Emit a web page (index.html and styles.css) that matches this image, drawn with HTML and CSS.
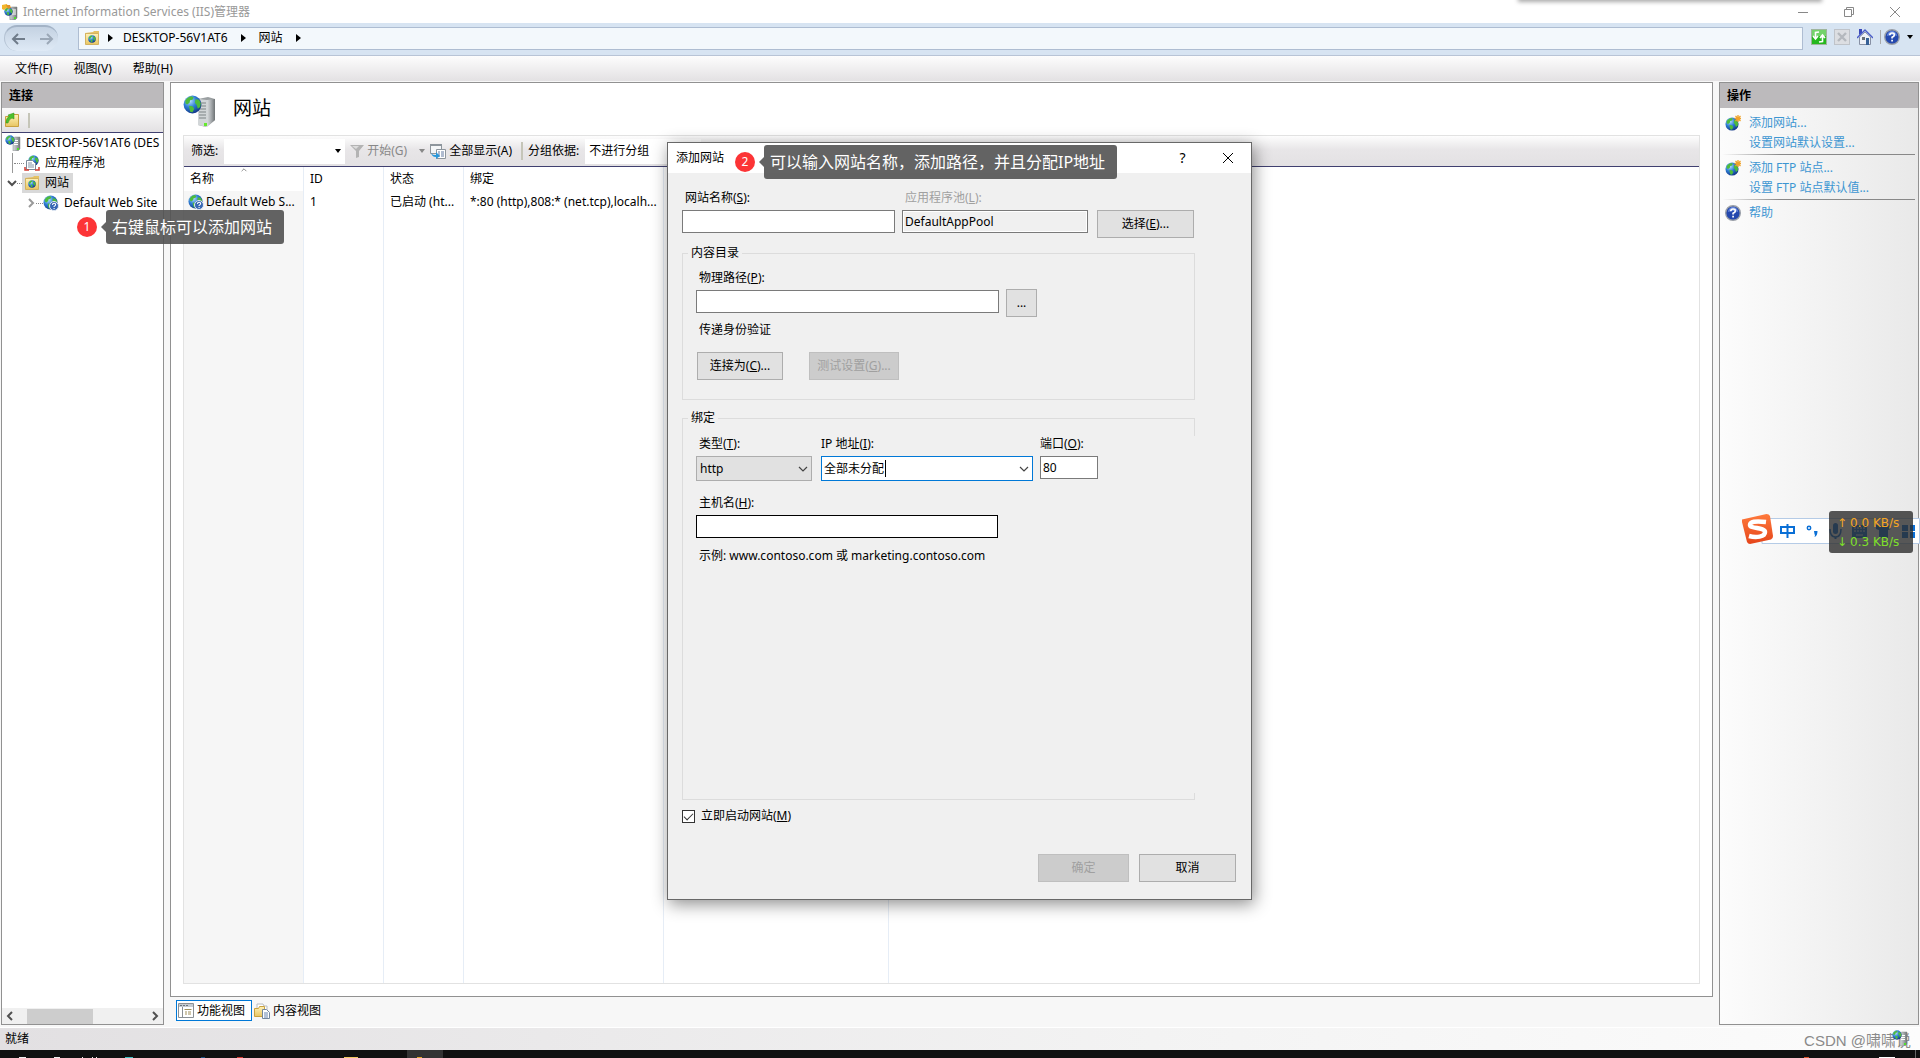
FILE: index.html
```html
<!DOCTYPE html>
<html lang="zh-CN">
<head>
<meta charset="utf-8">
<title>Internet Information Services (IIS)管理器</title>
<link rel="stylesheet" href="styles.css">
</head>
<body>
<svg class="defs" width="0" height="0" aria-hidden="true">
  <defs>
    <radialGradient id="sea" cx=".35" cy=".3" r=".8"><stop offset="0" stop-color="#b9e2ff"/><stop offset=".45" stop-color="#2f7fd6"/><stop offset="1" stop-color="#0b2a78"/></radialGradient>
    <linearGradient id="metal"><stop offset="0" stop-color="#d9dcde"/><stop offset=".5" stop-color="#a9adb0"/><stop offset="1" stop-color="#6d7274"/></linearGradient>
    <linearGradient id="paper" x2="0" y2="1"><stop offset="0" stop-color="#fff3b8"/><stop offset="1" stop-color="#e8c562"/></linearGradient>
    <linearGradient id="orange" x2="0" y2="1"><stop offset="0" stop-color="#ff7a3c"/><stop offset="1" stop-color="#e5451a"/></linearGradient>
    <symbol id="globe" viewBox="0 0 16 16">
      <circle cx="8" cy="8" r="7.500" fill="url(#sea)"/>
      <path d="M2 4.500Q4 1.500 7 1l2 1-1 2-2 .5-.5 2-2 1.500-1.500-1zM5 9l3 .5 1.500 2L8 14.500 6 14zM10.500 3.500l3 .5 1.500 3-.5 3-2 1.500-1-3-1.500-2z" fill="#4dbb3c"/>
    </symbol>
    <symbol id="host" viewBox="0 0 16 16">
      <path d="M8 3l2-1h5v12l-2 2H8z" fill="url(#metal)" stroke="#85898b" stroke-width=".5"/>
      <path d="M9 5.500h4M9 7.500h4M9 9.500h4" stroke="#fff"/>
      <path d="M12 13h2v2h-2z" fill="#4fe02c"/>
      <use href="#globe" x="0" y="0" width="10" height="10"/>
    </symbol>
    <symbol id="app" viewBox="0 0 16 16">
      <path d="M7 4l3-1h5v11l-2 2H8z" fill="url(#metal)" stroke="#74797b" stroke-width=".5"/>
      <path d="M10 6h4M10 8h4M10 10h4" stroke="#fff"/>
      <path d="M12 13h2v2h-2z" fill="#4fe02c"/>
      <use href="#globe" x="2" y="3" width="9" height="9"/>
      <path d="M0 1l5-1 1 3-4 3-2-1z" fill="#f3b62c"/>
      <path d="M4 1l4 0 1 3-3 1z" fill="#e0942a"/>
    </symbol>
    <symbol id="bighost" viewBox="0 0 32 32">
      <path d="M15 4l10-2 7 2v21l-9 7-8-2z" fill="#9a9fa1"/>
      <path d="M15 4l9 1v27l-9-2z" fill="#d2d6d8"/>
      <path d="M24 5l8-1v21l-8 7z" fill="url(#metal)"/>
      <path d="M16 8h7M16 11h7M16 14h7M16 17h7M16 20h7M16 23h7" stroke="#7d8385"/>
      <path d="M21 28h3v3h-3z" fill="#65e92c"/>
      <use href="#globe" x="0" y="0" width="19" height="19"/>
    </symbol>
    <symbol id="sitefolder" viewBox="0 0 16 16">
      <path d="M1 3l8-1 1-1h5v13H1z" fill="#e6c264"/>
      <path d="M1.500 3.500h13v11h-13z" fill="url(#paper)" stroke="#d3b261"/>
      <use href="#globe" x="4" y="5" width="8" height="8"/>
    </symbol>
    <symbol id="openfolder" viewBox="0 0 16 16">
      <path d="M1.500 4.500h6l1-2h6v12h-13z" fill="url(#paper)" stroke="#c9a13f"/>
      <path d="M2 11Q2 6 5 4.500L4 3l6-2 0 6-2-1Q5 7 4 11z" fill="#4dc12d" stroke="#2d8d18" stroke-width=".5"/>
    </symbol>
    <symbol id="pools" viewBox="0 0 16 16">
      <use href="#globe" x="4" y="0" width="11" height="11"/>
      <path d="M2.500 5.500h6l3 3v6h-9z" fill="#fff" stroke="#7a8998"/>
      <path d="M4 8h4M4 10h6M4 12h6" stroke="#8192a5"/>
      <path d="M1 12v3h4M11 15h4v-3" fill="none" stroke="#d23b32" stroke-width="1.500"/>
    </symbol>
    <symbol id="site" viewBox="0 0 16 16">
      <use href="#globe" x="0" y="0" width="15" height="15"/>
      <circle cx="11" cy="11" r="4.500" fill="#3767b4" stroke="#e3e9f2"/>
      <path d="M9.500 10q0-1.700 1.600-1.700t1.500 1.400q0 .8-1.500 1.700v.6M11.100 13v1" fill="none" stroke="#fff" stroke-width="1.100"/>
    </symbol>
    <symbol id="newsite" viewBox="0 0 16 16">
      <use href="#globe" x="0" y="2" width="14" height="14"/>
      <path d="M13 0v7M9.500 3.500h7M10.500 1l5 5M15.500 1l-5 5" stroke="#f0a32b" stroke-width="1.300"/>
    </symbol>
    <symbol id="help" viewBox="0 0 16 16">
      <circle cx="8" cy="8" r="7.300" fill="#2448ae" stroke="#9a9fa8" stroke-width="1.400"/>
      <path d="M3 7a5 5 0 0 1 10 0Q8 5 3 7z" fill="#6688dc"/>
      <path d="M5.800 6.300q0-2.300 2.300-2.300t2.200 1.900q0 1.200-2.200 2.400v1.200M8.100 10.800v1.700" fill="none" stroke="#fff" stroke-width="1.700"/>
    </symbol>
    <symbol id="chev" viewBox="0 0 10 10"><path d="M1 3l4 4 4-4" fill="none" stroke="currentColor" stroke-width="1.200"/></symbol>
    <symbol id="boldchev" viewBox="0 0 10 10"><path d="M1 3l4 4 4-4" fill="none" stroke="currentColor" stroke-width="2"/></symbol>
    <symbol id="tri" viewBox="0 0 6 4"><path d="M0 0h6L3 4z" fill="currentColor"/></symbol>
    <symbol id="right" viewBox="0 0 5 8"><path d="M0 0l5 4-5 4z"/></symbol>
  </defs>
</svg>

<header class="titlebar">
  <svg class="ic"><use href="#app"/></svg>
  <h1>Internet Information Services (IIS)管理器</h1>
  <div class="winbtns">
    <button type="button" aria-label="最小化"><svg width="10" height="10"><path d="M0 5.500h10"/></svg></button>
    <button type="button" aria-label="还原"><svg width="10" height="10"><path d="M.5 2.500h7v7h-7zM2.500 2.500v-2h7v7h-2"/></svg></button>
    <button type="button" aria-label="关闭"><svg width="10" height="10"><path d="M0 0l10 10M10 0L0 10"/></svg></button>
  </div>
  <div class="edge-shadow"></div>
</header>

<nav class="navbar">
  <div class="backfwd">
    <button type="button" aria-label="后退"><svg width="14" height="12"><path d="M14 6H2M7 1L2 6l5 5"/></svg></button>
    <button type="button" aria-label="前进" class="dim"><svg width="14" height="12"><path d="M0 6h12M7 1l5 5-5 5"/></svg></button>
  </div>
  <div class="address">
    <svg class="ic"><use href="#sitefolder"/></svg>
    <svg class="ar"><use href="#right"/></svg>
    <span>DESKTOP-56V1AT6</span>
    <svg class="ar"><use href="#right"/></svg>
    <span>网站</span>
    <svg class="ar"><use href="#right"/></svg>
  </div>
  <div class="navtools">
    <svg class="ic" viewBox="0 0 16 16"><rect x=".5" y=".5" width="15" height="15" fill="#25b81e" stroke="#9fb59c"/><path d="M1 1h14v6H1z" fill="#a9e59c" opacity=".6"/><path d="M8 3L4.500 3.500v5M2 7l2.500 3L7 7M8 13l3.500-.5v-5M9 9l2.500-3L14 9" fill="none" stroke="#fff" stroke-width="1.600"/></svg>
    <svg class="ic" viewBox="0 0 16 16"><rect x=".5" y=".5" width="15" height="15" fill="#dcdee2" stroke="#bfc3c9"/><path d="M4 4l8 8M12 4l-8 8" stroke="#b4b8be" stroke-width="2.400"/></svg>
    <svg class="ic" viewBox="0 0 16 16"><path d="M2.500 8L8 3l5.500 5v7.500h-11z" fill="#eef1f7" stroke="#8790a4"/><path d="M2 0h3v4L2 6z" fill="#3947b8"/><path d="M0 9l8-8 8 8" fill="none" stroke="#4a5cc8" stroke-width="1.400"/><path d="M9 9h3v7H9z" fill="#356096"/><path d="M5 8h3v3H5z" fill="#6a7078"/></svg>
    <i class="sep"></i>
    <svg class="ic"><use href="#help"/></svg>
    <svg class="tri"><use href="#tri"/></svg>
  </div>
</nav>

<div class="menubar">
  <button type="button">文件(F)</button><button type="button">视图(V)</button><button type="button">帮助(H)</button>
</div>

<main class="work">
  <aside class="panel connections">
    <h2>连接</h2>
    <div class="ptool"><svg class="ic"><use href="#openfolder"/></svg><i></i></div>
    <ul class="tree">
      <li class="lv0"><svg class="ic"><use href="#host"/></svg><span>DESKTOP-56V1AT6 (DES</span></li>
      <li class="lv1"><i class="dots"></i><svg class="ic"><use href="#pools"/></svg><span>应用程序池</span></li>
      <li class="lv1 sites"><svg class="exp"><use href="#boldchev"/></svg><i class="dots"></i><b><svg class="ic"><use href="#sitefolder"/></svg><span>网站</span></b></li>
      <li class="lv2"><svg class="exp closed"><use href="#boldchev"/></svg><i class="dots"></i><svg class="ic"><use href="#site"/></svg><span>Default Web Site</span></li>
    </ul>
    <div class="hscroll">
      <svg class="exp l"><use href="#boldchev"/></svg><div class="track"><div class="thumb"></div></div><svg class="exp r"><use href="#boldchev"/></svg>
    </div>
  </aside>

  <section class="center">
    <div class="panel page">
      <div class="pagehead"><svg><use href="#bighost"/></svg><h2>网站</h2></div>
      <div class="listbox">
        <div class="filter">
          <label for="flt">筛选:</label>
          <span class="combo"><input id="flt" type="text"><svg class="tri"><use href="#tri"/></svg></span>
          <button type="button" class="go" disabled><svg class="ic" viewBox="0 0 16 16"><path d="M1 2h14l-5 6v6l-3 1V8z" fill="#b3b3b3"/><path d="M3 3h7l-3 3z" fill="#dcdcdc"/></svg>开始(G)<svg class="tri"><use href="#tri"/></svg></button>
          <button type="button" class="all"><svg class="ic" viewBox="0 0 16 16"><path d="M.5 1.500h11v9H.5z" fill="#f4f6f8" stroke="#8d959c"/><path d="M0 1h12v2H0z" fill="#8d959c"/><path d="M6.500 6.500h9v9h-9z" fill="#fff" stroke="#8d959c"/><path d="M8 9h2m1 0h3M8 11h2m1 0h3M8 13h2m1 0h3" stroke="#6078a0"/><path d="M1 8q0 4 4 4h1v-3l4 4-4 3v-2Q1 14 1 8" fill="#2b98da"/></svg>全部显示(A)</button>
          <i class="sep"></i>
          <label for="grp">分组依据:</label>
          <select id="grp"><option>不进行分组</option></select>
        </div>
        <div class="tablewrap">
          <svg class="sort"><use href="#chev"/></svg>
          <table>
            <colgroup><col class="c1"><col class="c2"><col class="c2"><col class="c4"><col class="c5"><col></colgroup>
            <thead><tr><th>名称</th><th>ID</th><th>状态</th><th>绑定</th><th></th><th></th></tr></thead>
            <tbody>
              <tr class="row"><td><svg class="ic"><use href="#site"/></svg>Default Web S...</td><td>1</td><td>已启动 (ht...</td><td>*:80 (http),808:* (net.tcp),localh...</td><td></td><td></td></tr>
              <tr><td></td><td></td><td></td><td></td><td></td><td></td></tr>
            </tbody>
          </table>
        </div>
      </div>
    </div>
    <div class="viewtabs">
      <button type="button" class="on"><svg class="ic" viewBox="0 0 16 16"><path d="M.5.5h15v14H.5z" fill="#fff" stroke="#8a8f94"/><path d="M1 1h14v3H1z" fill="#c5cbd1"/><path d="M2 2.500h2m1 0h2m1 0h2" stroke="#6d747b"/><path d="M4.500 4v10" stroke="#8a8f94"/><path d="M6.500 6.500h7M7 9h2m1 0h3M7 11h2m1 0h3" stroke="#a08f5a"/></svg>功能视图</button>
      <button type="button"><svg class="ic" viewBox="0 0 16 16"><path d="M3 1h6l1 2h3v8H3z" fill="#fff" stroke="#b9bcc0"/><path d="M.5 5.500h4l1-2h5v10H.5z" fill="url(#paper)" stroke="#c9a13f"/><path d="M8.500 6.500h4l3 3v6h-7z" fill="#fff" stroke="#73879e"/><path d="M10 10h4M10 12h4M10 14h4" stroke="#6784b0"/></svg>内容视图</button>
    </div>
  </section>

  <aside class="panel actions">
    <h2>操作</h2>
    <ul>
      <li><svg class="ic"><use href="#newsite"/></svg><a href="#add">添加网站...</a></li>
      <li><a href="#defaults">设置网站默认设置...</a></li>
    </ul>
    <ul>
      <li><svg class="ic"><use href="#newsite"/></svg><a href="#ftp">添加 FTP 站点...</a></li>
      <li><a href="#ftpdefaults">设置 FTP 站点默认值...</a></li>
    </ul>
    <ul>
      <li><svg class="ic"><use href="#help"/></svg><a href="#help-topic">帮助</a></li>
    </ul>
  </aside>
</main>

<footer class="status"><span>就绪</span><span class="mark">CSDN @啸啸说</span><svg class="ic"><use href="#host"/></svg></footer>
<div class="taskbar">
  <svg width="450" height="8"><path d="M407 0h36v8h-36z" fill="#333"/><path d="M19 7h7v1h-7zM54 7h6v1h-6zM82 7h1v1h-1zM92 7h1v1h-1zM96 7h1v1h-1z" fill="#eee"/><path d="M125 7h8v1h-8z" fill="#3fc0c4"/><path d="M201 7h4v1h-4z" fill="#1c4f80"/><path d="M237 7h6v1h-6z" fill="#d23b32"/><path d="M344 7h14v1h-14z" fill="#f1c862"/><path d="M417 7h5v1h-5z" fill="#e3a52c"/></svg>
  <svg width="148" height="8"><path d="M107 7h16v1h-16z" fill="#fff"/><path d="M32 7h5v1h-5z" fill="#d9532c"/><path d="M143 0h1v8h-1z" fill="#666"/></svg>
</div>

<form class="dialog" role="dialog" aria-labelledby="dlg-title">
  <div class="dtitle"><span id="dlg-title">添加网站</span>
    <button type="button" aria-label="帮助" class="q">?</button>
    <button type="button" aria-label="关闭"><svg width="12" height="12"><path d="M1 1l10 10M11 1L1 11"/></svg></button>
  </div>
  <div class="dbody">
    <div class="line top">
      <div class="field name"><label for="sname">网站名称(<u>S</u>):</label><input id="sname" type="text"></div>
      <div class="field pool"><label for="pool" class="off">应用程序池(<u>L</u>):</label><input id="pool" type="text" value="DefaultAppPool" readonly></div>
      <button type="button" class="btn choose">选择(<u>E</u>)...</button>
    </div>
    <fieldset class="content">
      <legend>内容目录</legend>
      <div class="line">
        <div class="field path"><label for="path">物理路径(<u>P</u>):</label><input id="path" type="text"></div>
        <button type="button" class="btn dots3">...</button>
      </div>
      <p>传递身份验证</p>
      <div class="line auth"><button type="button" class="btn">连接为(<u>C</u>)...</button><button type="button" class="btn test" disabled>测试设置(<u>G</u>)...</button></div>
    </fieldset>
    <fieldset class="binding">
      <legend>绑定</legend>
      <div class="line">
        <div class="field type"><label for="type">类型(<u>T</u>):</label><span class="drop grey"><select id="type"><option>http</option></select><svg><use href="#chev"/></svg></span></div>
        <div class="field ip"><label for="ip">IP 地址(<u>I</u>):</label><span class="drop focus"><input id="ip" type="text" value="全部未分配"><i class="caret"></i><svg><use href="#chev"/></svg></span></div>
        <div class="field port"><label for="port">端口(<u>O</u>):</label><input id="port" type="text" value="80"></div>
      </div>
      <div class="field hostname"><label for="hostname">主机名(<u>H</u>):</label><input id="hostname" type="text"></div>
      <p>示例: www.contoso.com 或 marketing.contoso.com</p>
    </fieldset>
    <label class="check"><input type="checkbox" checked><span>立即启动网站(<u>M</u>)</span></label>
    <div class="dfoot"><button type="button" class="btn ok" disabled>确定</button><button type="button" class="btn cancel">取消</button></div>
  </div>
</form>

<div class="note one"><b>1</b><span>右键鼠标可以添加网站</span></div>
<div class="note two"><b>2</b><span>可以输入网站名称，添加路径，并且分配IP地址</span></div>

<div class="ime">
  <svg viewBox="0 0 178 30" width="178" height="30">
    <path d="M20 4.500h157.500v25H20z" fill="#fff" stroke="#b5cbe6"/>
    <path d="M0 5.500L24.500 0Q27 0 28 2l3 20q0 3-2 3.500L8 30q-2 0-3-2L0 8z" fill="url(#orange)"/>
    <path d="M24 8Q8 6 8 11c0 4 15 2 15 7 0 5-9 6-16 4" fill="none" stroke="#fff" stroke-width="4.500"/>
    <g fill="none" stroke="#0a6fd6" stroke-width="2"><path d="M39 13h13v6H39zM45.500 10v14"/><circle cx="67" cy="14" r="1.700" stroke-width="1.500"/></g>
    <path d="M72 17h3.500q0 5-3 6 1-2 0-3z" fill="#0a6fd6"/>
    <g fill="#0a6fd6"><rect x="91" y="9" width="5" height="11" rx="2.500"/><path d="M88 15q0 8 5.500 8t5.500-8" fill="none" stroke="#0a6fd6" stroke-width="1.500"/><path d="M92.500 23h2v2h-2zM110 11h15v13h-15zM134 11h4q2 2 4 0h5l2 4-3 1v8h-9v-8l-3-1zM160 11h6v6h-6zM168 11h5v6h-5zM160 18h6v6h-6zM168 18h5v6h-5z"/></g>
    <path d="M112 14h11M112 17h11" stroke="#fff" stroke-dasharray="2 1"/><path d="M114 21h7" stroke="#fff"/>
  </svg>
  <div class="speed"><span class="up">0.0 KB/s</span><span class="down">0.3 KB/s</span></div>
</div>
</body>
</html>
```
FILE: styles.css
```css
* { box-sizing: border-box; }
body {
  margin: 0; height: 100vh; display: flex; flex-direction: column; position: relative; overflow: hidden;
  font: 12px/20px "Noto Sans", "Noto Sans CJK SC", sans-serif; color: #000; background: #f7f7f7;
}
button, input, select { font: inherit; color: inherit; margin: 0; padding: 0; border: 0; background: none; border-radius: 0; outline: 0; }
select { appearance: none; }
h1, h2, p, ul { margin: 0; padding: 0; font-size: 12px; font-weight: 400; list-style: none; }
svg { display: block; flex: none; }
.defs { position: absolute; }
.ic { width: 16px; height: 16px; }
.tri { width: 6px; height: 4px; }
.ar { width: 5px; height: 8px; }
.exp { width: 10px; height: 10px; color: #505050; }

.titlebar { display: flex; align-items: center; height: 23px; flex: none; background: #fff; color: #999; padding: 0 2px; gap: 5px; position: relative; }
.winbtns { display: flex; margin-left: auto; }
.winbtns button { width: 46px; height: 20px; display: grid; place-items: center; }
.winbtns path { fill: none; stroke: #888; }
.edge-shadow { position: absolute; top: -8px; right: 100px; width: 300px; height: 8px; box-shadow: 0 0 4px 2px #aaa; }

.navbar { display: flex; align-items: center; height: 33px; flex: none; background: #d7e4f2; border-bottom: 1px solid #b8c4d6; padding: 0 7px 2px 0; }
.backfwd { width: 54px; height: 26px; margin: 0 20px 0 4px; display: flex; justify-content: space-between; align-items: center; padding: 0 4px 0 6px; border-radius: 13px; border-top: 2px solid #a3b3c6; border-left: 1px solid #b4c2d3; background: linear-gradient(#c4d2e2, #dfeaf6); }
.backfwd path { fill: none; stroke: #707c8a; stroke-width: 2; }
.backfwd .dim path { stroke: #9ba8b7; }
.address { flex: 1; height: 23px; border: 1px solid #aebdd2; background: #f3f8fc; display: flex; align-items: center; gap: 13px; padding-left: 5px; }
.address .ic { margin-right: -5px; }
.address .ic + .ar { margin-right: -3px; }
.navtools { display: flex; align-items: center; gap: 7px; margin: 0 0 3px 8px; }
.navtools .sep { width: 1px; height: 14px; background: #aaa; margin-right: -4px; }

.menubar { display: flex; height: 25px; flex: none; gap: 21px; padding-left: 15px; background: linear-gradient(#fdfdfd, #e3e1e3); }

.work { flex: 1; min-height: 0; display: flex; gap: 6px; padding: 1px 1px 2px; }
.panel { border: 1px solid #919191; background: #fff; min-width: 0; }
.connections, .actions { display: flex; flex-direction: column; }
.connections { width: 163px; flex: none; }
.connections h2, .actions h2 { height: 25px; flex: none; line-height: 26px; padding-left: 7px; font-weight: 700; background: #bcbabc; }
.ptool { height: 25px; flex: none; display: flex; align-items: center; gap: 8px; padding-left: 2px; background: linear-gradient(#fafafa, #e3e1e3); border-bottom: 1px solid #404070; }
.ptool i { width: 2px; height: 15px; background: #c5c5b8; }
.tree { flex: 1; overflow: hidden; white-space: nowrap; }
.tree li { display: flex; align-items: center; height: 20px; gap: 5px; }
.lv0 { padding-left: 3px; }
.tree .lv1 { padding-left: 12px; gap: 0; }
.tree .lv1 span { margin-left: 5px; }
.lv1:not(.sites) { background: linear-gradient(#999, #999) no-repeat 10px 0 / 1px 100%; }
.dots { border-top: 1px dotted #888; width: 10px; }
.tree .sites { padding-left: 5px; }
.sites .dots { width: 5px; }
.sites b { display: flex; align-items: center; height: 20px; background: #d9d9d9; font-weight: 400; padding: 0 4px 0 2px; }
.tree .lv2 { padding-left: 24px; gap: 0; }
.lv2 .dots { width: 7px; }
.lv2 span { margin-left: 5px; }
.closed, .exp.r { transform: rotate(-90deg); }
.closed { color: #999; }
.exp.l { transform: rotate(90deg); }
.hscroll { height: 16px; flex: none; background: #f0f0f0; display: flex; align-items: center; gap: 12px; padding: 0 3px; }
.track { flex: 1; height: 15px; }
.thumb { width: 66px; height: 100%; background: #cdcdcd; }

.center { flex: 1; min-width: 0; display: flex; flex-direction: column; }
.page { flex: 1; min-height: 0; display: flex; flex-direction: column; padding: 12px 12px; }
.pagehead { display: flex; gap: 18px; height: 40px; flex: none; }
.pagehead svg { width: 32px; height: 32px; }
.pagehead h2 { font-size: 19px; line-height: 26px; }
.listbox { flex: 1; min-height: 0; border: 1px solid #e2e2e2; display: flex; flex-direction: column; }
.filter { display: flex; align-items: center; height: 31px; flex: none; padding-left: 7px; border-bottom: 1px solid #404070; background: linear-gradient(#fdfdfd, #e8e6e8 45%, #e3e1e3); }
.combo { display: flex; align-items: center; width: 121px; height: 25px; background: #fff; margin: 0 4px 0 6px; padding-right: 4px; }
.combo input { flex: 1; min-width: 0; }
.go, .all { display: flex; align-items: center; gap: 2px; }
.go { color: #888; }
.go .tri { margin: 0 5px 0 10px; }
.all { gap: 3px; }
.filter .sep { width: 2px; height: 18px; background: #c5c5b8; margin: 0 5px 0 9px; }
.filter select { width: 116px; height: 25px; background: #fff; margin-left: 6px; padding-left: 4px; }
.tablewrap { flex: 1; min-height: 0; position: relative; }
.sort { position: absolute; left: 55px; top: 0; width: 10px; height: 6px; transform: rotate(180deg); color: #666; }
table { width: 100%; height: 100%; table-layout: fixed; border-collapse: separate; border-spacing: 0; }
.c1 { width: 120px; } .c2 { width: 80px; } .c4 { width: 200px; } .c5 { width: 225px; }
th, td { padding: 0 0 0 6px; border-right: 1px solid #e6edf6; font-weight: 400; text-align: left; white-space: nowrap; overflow: hidden; }
th:last-child, td:last-child { border-right: 0; }
th { height: 24px; }
.row td { height: 21px; }
td:first-child { background: #f6f6f6; }
.row td:first-child { padding-left: 4px; }
td .ic { float: left; margin: 2px 2px 0 0; }

.viewtabs { display: flex; height: 28px; flex: none; padding: 3px 0 0 6px; gap: 0; }
.viewtabs button { display: flex; align-items: center; gap: 3px; height: 21px; width: 76px; padding: 0 1px; border: 1px solid transparent; white-space: nowrap; }
.viewtabs .on { border-color: #0078d7; background: #fff; }

.actions { width: 200px; flex: none; background: linear-gradient(90deg, #fcfcfc, #e9e9e9); }
.actions ul { padding: 3px 0 1px; margin: 0 3px; }
.actions h2 + ul { padding-top: 5px; }
.actions ul + ul { border-top: 1px solid #888; border-image: linear-gradient(90deg, transparent, #888 30%) 1; }
.actions li { height: 20px; display: flex; align-items: center; padding-left: 26px; }
.actions .ic { margin: 0 8px 0 -24px; }
.actions a { color: #3d96d2; text-decoration: none; }

.status { height: 23px; flex: none; display: flex; align-items: center; padding: 0 12px 0 5px; border-top: 1px solid #fff; background: linear-gradient(90deg, #e2e0e2, #f3f3f3 60%, #fcfcfc); }
.mark { margin-left: auto; font: 15px/20px "Liberation Sans", "Noto Sans CJK SC", sans-serif; color: #8a8a8a; padding-top: 3px; }
.status .ic { margin: 0 0 2px -19px; }
.taskbar { height: 8px; flex: none; background: #101010; display: flex; justify-content: space-between; }

.dialog { position: absolute; left: 667px; top: 142px; width: 585px; background: #f0f0f0; border: 1px solid #686868; box-shadow: 2px 4px 16px rgba(0, 0, 0, .45); }
.dtitle { height: 30px; background: #fff; display: flex; align-items: center; padding: 0 1px 0 8px; }
.dtitle span { flex: 1; }
.dtitle button { width: 45px; height: 28px; display: grid; place-items: center; font-size: 14px; }
.dtitle path { fill: none; stroke: #000; }
.dbody { padding: 14px 15px 17px 14px; }
.dbody input[type=text] { height: 23px; border: 1px solid #7a7a7a; background: #fff; padding: 0 2px 1px; display: block; width: 100%; }
.line { display: flex; align-items: flex-end; }
.field label { display: block; height: 23px; line-height: 22px; padding-left: 3px; }
.off { color: #a0a0a0; }
.name { width: 213px; margin-right: 7px; }
.pool { width: 186px; margin-right: 9px; }
.dbody .pool input { background: #f0f0f0; box-shadow: inset 0 0 0 1px #fff; }
.btn { height: 28px; border: 1px solid #adadad; background: #e1e1e1; display: block; text-align: center; }
.btn:disabled { background: #ccc; border-color: #bfbfbf; color: #a0a0a0; }
.choose { width: 97px; margin-bottom: -5px; }
fieldset { width: 513px; margin: 0; padding: 4px 0 0 13px; border: 1px solid #dcdcdc; min-width: 0; }
legend { padding: 0 3px; margin-left: -8px; }
.content { height: 157px; margin-top: 10px; }
.path { width: 303px; margin-right: 7px; }
.dots3 { width: 31px; margin-bottom: -4px; }
fieldset p { padding: 7px 0 0 3px; }
.auth { gap: 26px; padding: 12px 0 0 1px; }
.auth .btn { width: 86px; }
.auth .test { width: 90px; }
.binding { height: 392px; margin-top: 8px; border-right: 0; padding-top: 5px; background: linear-gradient(#dcdcdc, #dcdcdc) no-repeat right top / 1px 17px, linear-gradient(#dcdcdc, #dcdcdc) no-repeat right bottom / 1px 6px; }
.binding .line { align-items: flex-start; }
.type { width: 116px; margin-right: 9px; }
.ip { width: 212px; margin-right: 7px; }
.port { width: 58px; }
.ip label, .port label { padding-left: 0; }
.drop { display: flex; position: relative; height: 25px; border: 1px solid #adadad; align-items: center; }
.drop svg { width: 10px; height: 10px; position: absolute; right: 3px; color: #444; }
.grey { background: #e1e1e1; }
.grey select { width: 100%; height: 23px; padding-left: 3px; }
.focus { border-color: #0078d7; background: #fff; }
.dbody .focus input { border: 0; }
.caret { position: absolute; left: 63px; top: 3px; width: 1px; height: 17px; background: #000; }
.hostname { width: 302px; margin-top: 11px; }
.dbody .hostname input { border-color: #000; }
.hostname + p { padding-top: 8px; }
.check { display: flex; align-items: center; gap: 6px; margin-top: 6px; height: 20px; }
.check input { appearance: none; width: 13px; height: 13px; border: 1px solid #333; background: #fff; display: grid; place-items: center; }
.check input::before { content: ""; width: 8px; height: 4px; border: solid #333; border-width: 0 0 1px 1px; transform: translateY(-1px) rotate(-45deg); }
.dfoot { display: flex; justify-content: flex-end; gap: 10px; margin-top: 28px; }
.ok { width: 91px; }
.cancel { width: 97px; }

.note { position: absolute; display: flex; align-items: center; gap: 9px; color: #fff; }
.note b { width: 20px; height: 20px; border-radius: 50%; background: #fc3436; font-weight: 400; text-align: center; }
.note span { height: 34px; line-height: 34px; padding: 0 12px 0 6px; font-size: 16px; background: rgba(82, 82, 82, .9); border-radius: 3px; position: relative; white-space: nowrap; }
.note span::before { content: ""; position: absolute; left: -5px; top: 12px; border: solid transparent; border-width: 5px 5px 5px 0; border-right-color: rgba(82, 82, 82, .9); }
.one { left: 77px; top: 210px; }
.two { left: 735px; top: 145px; }

.ime { position: absolute; right: 0; top: 514px; }
.speed { position: absolute; left: 87px; top: -3px; width: 84px; height: 42px; padding: 3px 0 0 8px; background: rgba(45, 45, 45, .8); border-radius: 3px; line-height: 19px; display: flex; flex-direction: column; font-family: "DejaVu Sans", sans-serif; font-size: 12px; white-space: nowrap; }
.speed span::before { content: "↑"; display: inline-block; width: 13px; }
.speed .down::before { content: "↓"; }
.up { color: #f5a623; }
.down { color: #7fe02a; }
```
